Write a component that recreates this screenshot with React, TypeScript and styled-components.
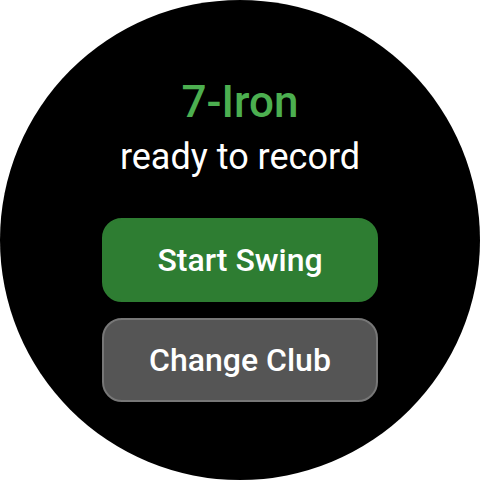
import React from 'react';
import styled, { createGlobalStyle } from 'styled-components';

const GlobalStyle = createGlobalStyle`
  html, body {
    margin: 0;
    padding: 0;
    background: #ffffff;
  }
  body {
    font-family: Roboto, "Noto Sans", sans-serif;
  }
`;

const Watch = styled.div`
  width: 480px;
  height: 480px;
  border-radius: 50%;
  background: #000000;
  display: flex;
  flex-direction: column;
  align-items: center;
  box-sizing: border-box;
  padding-top: 77px;
`;

const ClubName = styled.div`
  color: #4caf50;
  font-size: 44px;
  font-weight: 500;
  line-height: 50px;
`;

const Status = styled.div`
  color: #ffffff;
  font-size: 36px;
  font-weight: 400;
  line-height: 44px;
  margin-top: 8px;
`;

const Actions = styled.div`
  display: flex;
  flex-direction: column;
  gap: 16px;
  margin-top: 39px;
`;

const ActionButton = styled.button<{ $variant: 'primary' | 'secondary' }>`
  width: 276px;
  height: 84px;
  border-radius: 20px;
  box-sizing: border-box;
  padding: 0;
  font-family: Roboto, "Noto Sans", sans-serif;
  font-size: 32px;
  font-weight: 500;
  color: #ffffff;
  cursor: pointer;
  background: ${({ $variant }) => ($variant === 'primary' ? '#2e7d32' : '#555555')};
  border: 2px solid ${({ $variant }) => ($variant === 'primary' ? '#2e7d32' : '#777777')};
`;

export default function App() {
  return (
    <>
      <GlobalStyle />
      <Watch>
        <ClubName>7-Iron</ClubName>
        <Status>ready to record</Status>
        <Actions>
          <ActionButton $variant="primary">Start Swing</ActionButton>
          <ActionButton $variant="secondary">Change Club</ActionButton>
        </Actions>
      </Watch>
    </>
  );
}
